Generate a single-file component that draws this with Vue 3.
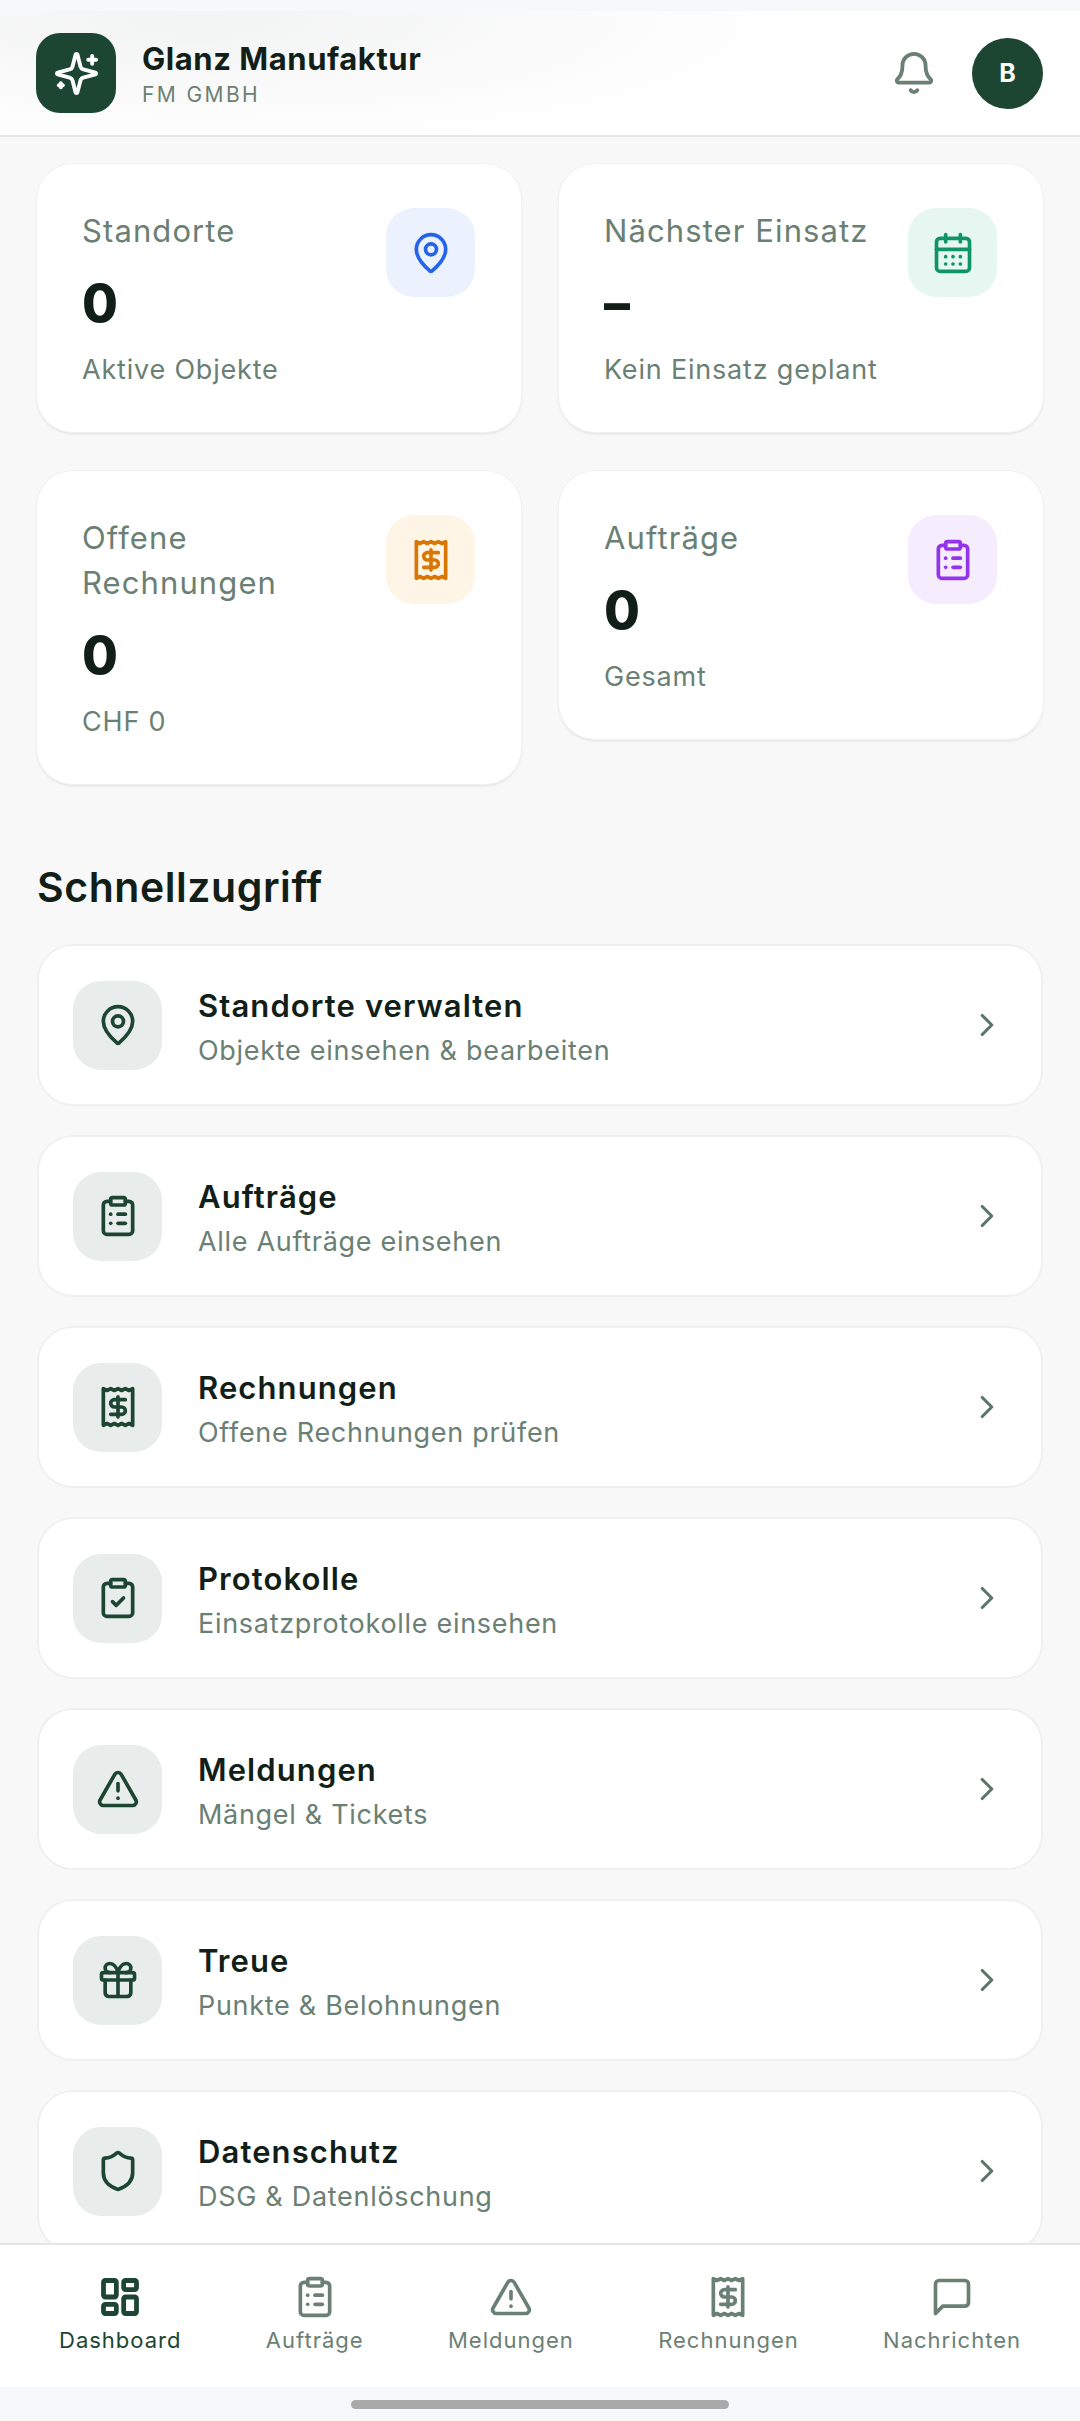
<script setup>
import { h } from 'vue'

const paths = {
  sparkles: ['M9.937 15.5A2 2 0 0 0 8.5 14.063l-6.135-1.582a.5.5 0 0 1 0-.962L8.5 9.936A2 2 0 0 0 9.937 8.5l1.582-6.135a.5.5 0 0 1 .963 0L14.063 8.5A2 2 0 0 0 15.5 9.937l6.135 1.581a.5.5 0 0 1 0 .964L15.5 14.063a2 2 0 0 0-1.437 1.437l-1.582 6.135a.5.5 0 0 1-.963 0z', 'M20 3v4', 'M22 5h-4', 'M4 17v2', 'M5 18H3'],
  bell: ['M10.268 21a2 2 0 0 0 3.464 0', 'M3.262 15.326A1 1 0 0 0 4 17h16a1 1 0 0 0 .74-1.673C19.41 13.956 18 12.499 18 8A6 6 0 0 0 6 8c0 4.499-1.411 5.956-2.738 7.326'],
  pin: ['M20 10c0 4.993-5.539 10.193-7.399 11.799a1 1 0 0 1-1.202 0C9.539 20.193 4 14.993 4 10a8 8 0 0 1 16 0', 'M15 10a3 3 0 1 1-6 0a3 3 0 1 1 6 0'],
  calendar: ['M8 2v4', 'M16 2v4', 'M5 4h14a2 2 0 0 1 2 2v14a2 2 0 0 1-2 2H5a2 2 0 0 1-2-2V6a2 2 0 0 1 2-2z', 'M3 10h18', 'M8 14h.01', 'M12 14h.01', 'M16 14h.01', 'M8 18h.01', 'M12 18h.01', 'M16 18h.01'],
  receipt: ['M4 2v20l2-1 2 1 2-1 2 1 2-1 2 1 2-1 2 1V2l-2 1-2-1-2 1-2-1-2 1-2-1-2 1Z', 'M16 8h-6a2 2 0 1 0 0 4h4a2 2 0 1 1 0 4H8', 'M12 17.5v-11'],
  list: ['M9 2h6a1 1 0 0 1 1 1v2a1 1 0 0 1-1 1H9a1 1 0 0 1-1-1V3a1 1 0 0 1 1-1z', 'M16 4h2a2 2 0 0 1 2 2v14a2 2 0 0 1-2 2H6a2 2 0 0 1-2-2V6a2 2 0 0 1 2-2h2', 'M12 11h4', 'M12 16h4', 'M8 11h.01', 'M8 16h.01'],
  check: ['M9 2h6a1 1 0 0 1 1 1v2a1 1 0 0 1-1 1H9a1 1 0 0 1-1-1V3a1 1 0 0 1 1-1z', 'M16 4h2a2 2 0 0 1 2 2v14a2 2 0 0 1-2 2H6a2 2 0 0 1-2-2V6a2 2 0 0 1 2-2h2', 'm9 14 2 2 4-4'],
  alert: ['m21.73 18-8-14a2 2 0 0 0-3.48 0l-8 14A2 2 0 0 0 4 21h16a2 2 0 0 0 1.73-3', 'M12 9v4', 'M12 17h.01'],
  gift: ['M4 8h16a1 1 0 0 1 1 1v2a1 1 0 0 1-1 1H4a1 1 0 0 1-1-1V9a1 1 0 0 1 1-1z', 'M12 8v13', 'M19 12v7a2 2 0 0 1-2 2H7a2 2 0 0 1-2-2v-7', 'M7.5 8a2.5 2.5 0 0 1 0-5A4.8 8 0 0 1 12 8a4.8 8 0 0 1 4.5-5 2.5 2.5 0 0 1 0 5'],
  shield: ['M20 13c0 5-3.5 7.5-7.66 8.95a1 1 0 0 1-.67-.01C7.5 20.5 4 18 4 13V6a1 1 0 0 1 1-1c2 0 4.5-1.2 6.24-2.72a1.17 1.17 0 0 1 1.52 0C14.51 3.81 17 5 19 5a1 1 0 0 1 1 1z'],
  chevron: ['m9 18 6-6-6-6'],
  dashboard: ['M4 3h5a1 1 0 0 1 1 1v7a1 1 0 0 1-1 1H4a1 1 0 0 1-1-1V4a1 1 0 0 1 1-1z', 'M15 3h5a1 1 0 0 1 1 1v3a1 1 0 0 1-1 1h-5a1 1 0 0 1-1-1V4a1 1 0 0 1 1-1z', 'M15 12h5a1 1 0 0 1 1 1v7a1 1 0 0 1-1 1h-5a1 1 0 0 1-1-1v-7a1 1 0 0 1 1-1z', 'M4 16h5a1 1 0 0 1 1 1v3a1 1 0 0 1-1 1H4a1 1 0 0 1-1-1v-3a1 1 0 0 1 1-1z'],
  message: ['M21 15a2 2 0 0 1-2 2H7l-4 4V5a2 2 0 0 1 2-2h14a2 2 0 0 1 2 2z']
}

const Icon = (props) =>
  h('svg', { width: props.size || 44, height: props.size || 44, viewBox: '0 0 24 24', fill: 'none', stroke: 'currentColor', 'stroke-width': props.weight || 2, 'stroke-linecap': 'round', 'stroke-linejoin': 'round' },
    paths[props.name].map((d) => h('path', { d })))
Icon.props = ['name', 'size', 'weight']

const stats = [
  { label: 'Standorte', value: '0', sub: 'Aktive Objekte', icon: 'pin', tone: 'blue' },
  { label: 'Nächster Einsatz', value: '–', sub: 'Kein Einsatz geplant', icon: 'calendar', tone: 'green' },
  { label: 'Offene Rechnungen', value: '0', sub: 'CHF 0', icon: 'receipt', tone: 'orange' },
  { label: 'Aufträge', value: '0', sub: 'Gesamt', icon: 'list', tone: 'purple' }
]

const links = [
  { title: 'Standorte verwalten', sub: 'Objekte einsehen & bearbeiten', icon: 'pin' },
  { title: 'Aufträge', sub: 'Alle Aufträge einsehen', icon: 'list' },
  { title: 'Rechnungen', sub: 'Offene Rechnungen prüfen', icon: 'receipt' },
  { title: 'Protokolle', sub: 'Einsatzprotokolle einsehen', icon: 'check' },
  { title: 'Meldungen', sub: 'Mängel & Tickets', icon: 'alert' },
  { title: 'Treue', sub: 'Punkte & Belohnungen', icon: 'gift' },
  { title: 'Datenschutz', sub: 'DSG & Datenlöschung', icon: 'shield' }
]

const tabs = [
  { label: 'Dashboard', icon: 'dashboard', active: true },
  { label: 'Aufträge', icon: 'list' },
  { label: 'Meldungen', icon: 'alert' },
  { label: 'Rechnungen', icon: 'receipt' },
  { label: 'Nachrichten', icon: 'message' }
]
</script>

<template>
  <div class="screen">
    <div class="status"></div>
    <header class="header">
      <div class="logo"><Icon name="sparkles" :size="47" /></div>
      <div class="brand">
        <div class="brand-name">Glanz Manufaktur</div>
        <div class="brand-sub">FM GMBH</div>
      </div>
      <div class="bell"><Icon name="bell" :size="46" /></div>
      <div class="avatar">B</div>
    </header>

    <main class="content">
      <section class="stats">
        <article v-for="s in stats" :key="s.label" class="stat">
          <div class="stat-text">
            <div class="stat-label">{{ s.label }}</div>
            <div class="stat-value">{{ s.value }}</div>
            <div class="stat-sub">{{ s.sub }}</div>
          </div>
          <div class="tile" :class="s.tone"><Icon :name="s.icon" /></div>
        </article>
      </section>

      <h2 class="section-title">Schnellzugriff</h2>

      <section class="links">
        <article v-for="l in links" :key="l.title" class="link">
          <div class="tile grey"><Icon :name="l.icon" /></div>
          <div class="link-text">
            <div class="link-title">{{ l.title }}</div>
            <div class="link-sub">{{ l.sub }}</div>
          </div>
          <div class="chevron"><Icon name="chevron" :size="38" /></div>
        </article>
      </section>
    </main>

    <nav class="nav">
      <div v-for="t in tabs" :key="t.label" class="tab" :class="{ active: t.active }">
        <Icon :name="t.icon" :weight="t.active ? 2.6 : 2" />
        <span class="tab-label">{{ t.label }}</span>
      </div>
    </nav>
    <div class="gesture"><div class="home"></div></div>
  </div>
</template>

<style scoped>
.screen {
  width: 1080px;
  height: 2421px;
  display: flex;
  flex-direction: column;
  overflow: hidden;
  background: #f8f8f8;
  font-family: Inter, "Liberation Sans", sans-serif;
  color: #111f18;
}
.status { height: 11px; background: #f7f8fa; flex: none; }
.header {
  flex: none;
  height: 126px;
  box-sizing: border-box;
  display: flex;
  align-items: center;
  padding: 0 37px 0 36px;
  background: radial-gradient(ellipse 620px 130px at 200px 10px, #f2f3f3 0%, #fafafa 55%, #ffffff 100%);
  border-bottom: 2px solid #e2e6e4;
}
.logo {
  width: 80px;
  height: 80px;
  border-radius: 24px;
  background: #1c4532;
  color: #fff;
  display: flex;
  align-items: center;
  justify-content: center;
}
.brand { flex: 1; margin-left: 26px; padding-top: 3px; }
.brand-name { font-size: 31px; font-weight: 700; line-height: 40px; letter-spacing: 0.55px; }
.brand-sub { font-size: 21px; line-height: 30px; color: #6b8074; letter-spacing: 2.4px; margin-top: 1px; }
.bell { color: #6b8074; display: flex; margin-right: 35px; }
.avatar {
  width: 71px;
  height: 71px;
  border-radius: 50%;
  background: #1c4532;
  color: #fff;
  display: flex;
  align-items: center;
  justify-content: center;
  font-size: 25px;
  font-weight: 700;
}
.content { flex: 1; min-height: 0; overflow: hidden; padding: 27px 37px 0; }
.stats {
  display: grid;
  grid-template-columns: 484px 484px;
  column-gap: 38px;
  row-gap: 39px;
  align-items: start;
}
.stat {
  display: flex;
  align-items: flex-start;
  gap: 10px;
  padding: 44px 46px 42px 45px;
  background: #fff;
  border-radius: 36px;
  box-shadow: 0 0 0 1px #f1f1f1, 0 2px 3px rgba(0, 0, 0, 0.1);
}
.stat-text { flex: 1; min-width: 0; }
.stat-label { font-size: 31px; line-height: 45px; color: #6b8074; letter-spacing: 1.1px; }
.stat-value { font-size: 52px; font-weight: 800; line-height: 66px; margin-top: 18px; }
.stat-sub { font-size: 27px; line-height: 41px; color: #6b8074; margin-top: 12px; letter-spacing: 0.8px; }
.tile {
  flex: 0 1 89px;
  height: 89px;
  border-radius: 28px;
  display: flex;
  align-items: center;
  justify-content: center;
}
.blue { background: #ebf1fd; color: #2563eb; }
.green { background: #e6f7f1; color: #0f9468; }
.orange { background: #fef5e7; color: #d97706; }
.purple { background: #f5ecfe; color: #9333ea; }
.grey { background: #e8ecea; color: #1c4532; flex: none; width: 89px; }
.section-title { margin: 75px 0 0; font-size: 41px; line-height: 56px; font-weight: 600; letter-spacing: 0.55px; }
.links { display: flex; flex-direction: column; gap: 29px; margin-top: 29px; }
.link {
  flex: none;
  height: 162px;
  box-sizing: border-box;
  display: flex;
  align-items: center;
  padding: 0 33px 0 34px;
  background: #fff;
  border: 2px solid #eff0f0;
  border-radius: 36px;
}
.link-text { flex: 1; margin-left: 36px; padding-top: 5px; }
.link-title { font-size: 31px; font-weight: 600; line-height: 42px; letter-spacing: 1.1px; }
.link-sub { font-size: 27px; line-height: 40px; color: #6b8074; margin-top: 4px; letter-spacing: 0.7px; }
.chevron { color: #5c7568; display: flex; margin-right: 2px; }
.nav {
  flex: none;
  height: 144px;
  box-sizing: border-box;
  display: flex;
  justify-content: space-between;
  padding: 30px 59px 0;
  background: #fff;
  border-top: 2px solid #e2e6e4;
}
.tab { display: flex; flex-direction: column; align-items: center; color: #6b8074; }
.tab.active { color: #1c4532; }
.tab-label { font-size: 22px; line-height: 30px; margin-top: 6px; letter-spacing: 1px; }
.gesture { flex: none; height: 34px; background: #f7f8fa; display: flex; justify-content: center; padding-top: 13px; box-sizing: border-box; }
.home { width: 378px; height: 9px; border-radius: 5px; background: #a9a9a9; }
</style>
